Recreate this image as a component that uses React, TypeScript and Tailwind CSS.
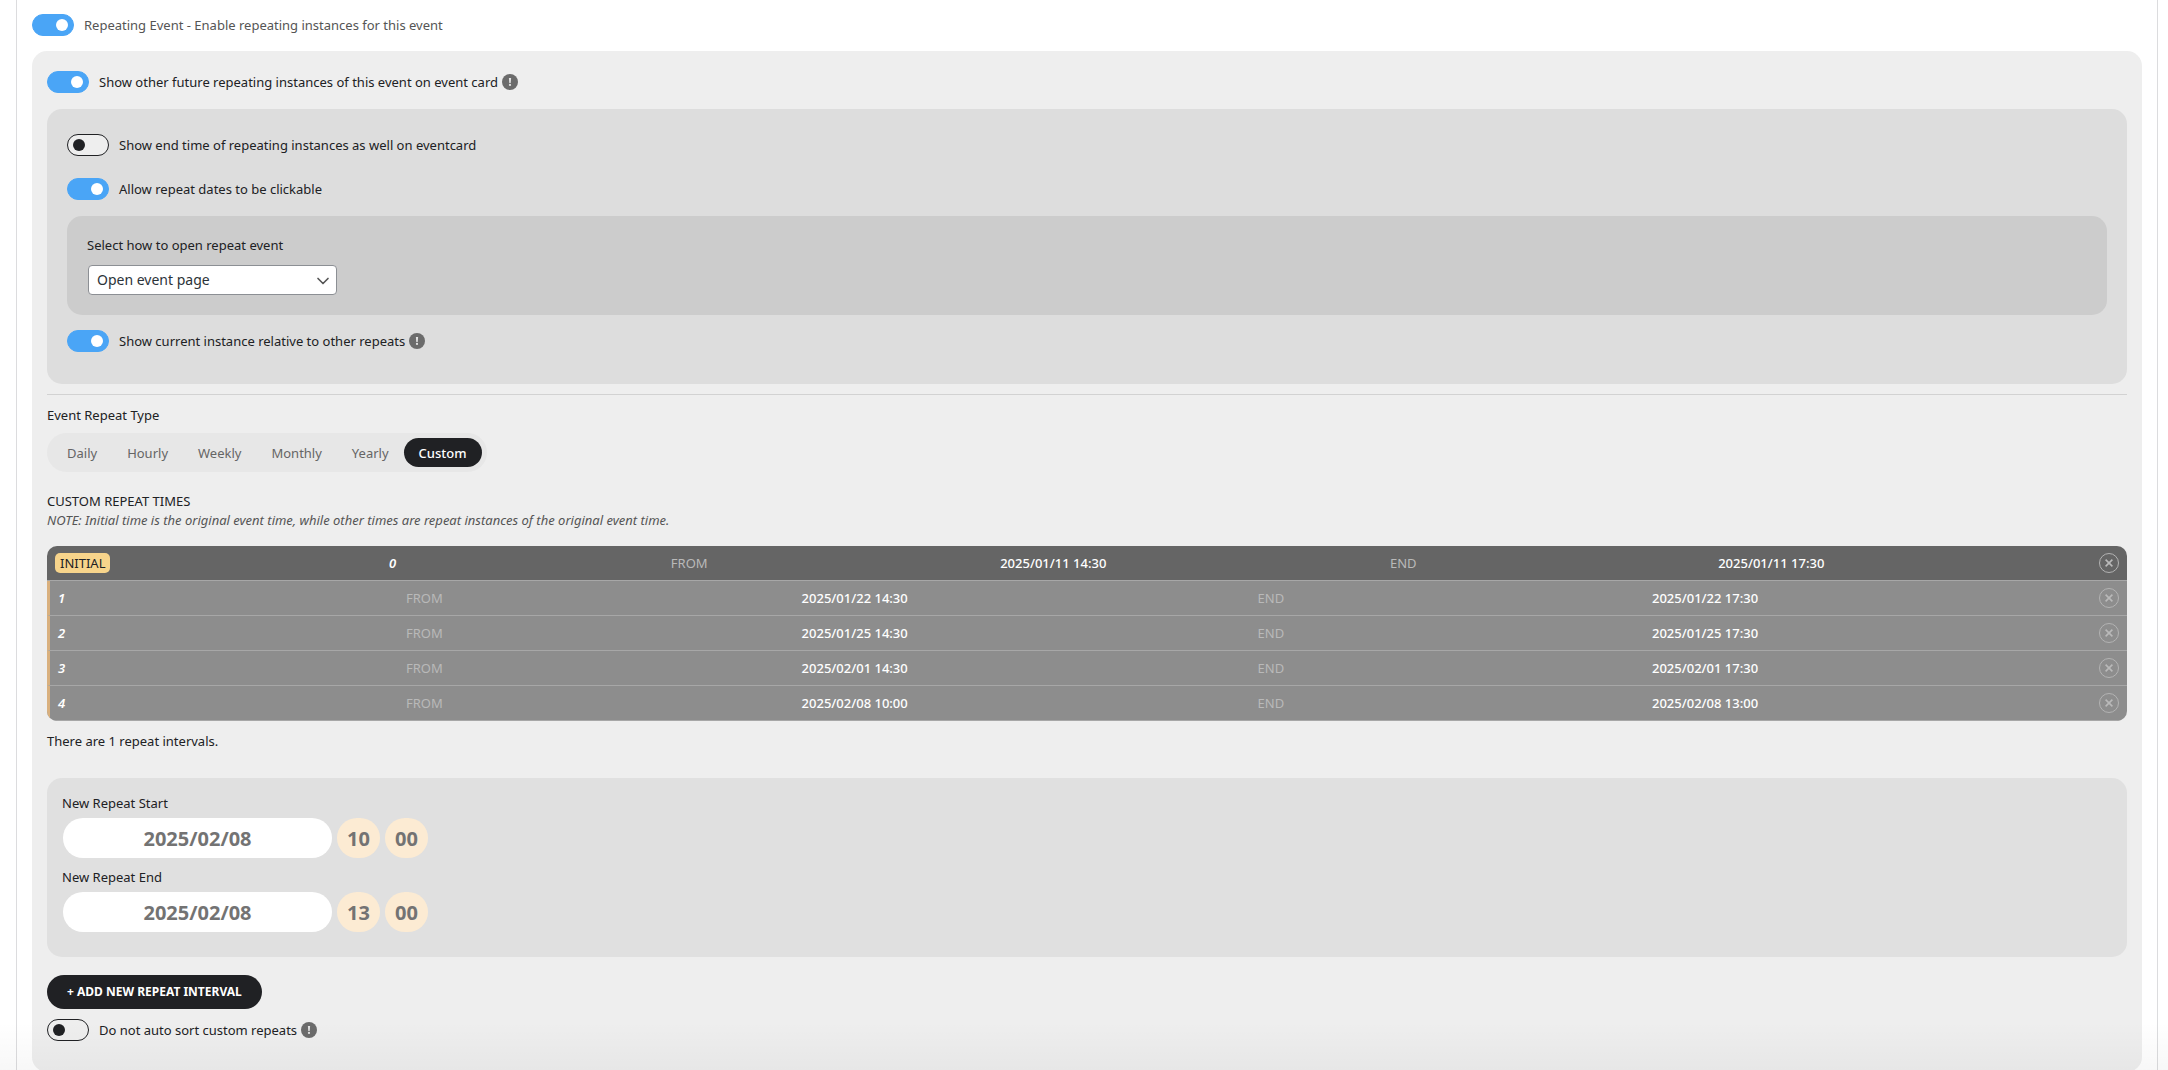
import { ChevronDown } from 'lucide-react';

function InfoBadge() {
  return (
    <svg viewBox="0 0 16 16" className="ml-1 size-4 shrink-0" role="img" aria-label="More information">
      <circle cx="8" cy="8" r="8" fill="#6b6b6b" />
      <path d="M6.9 4h2.2l-.4 4.9H7.3z" fill="#e4e4e4" />
      <circle cx="8" cy="10.9" r="1.1" fill="#e4e4e4" />
    </svg>
  );
}

function Toggle({
  label,
  on = false,
  info = false,
  muted = false,
  clear = false,
}: {
  label: string;
  on?: boolean;
  info?: boolean;
  muted?: boolean;
  clear?: boolean;
}) {
  return (
    <label className="flex h-[22px] w-fit items-center">
      <input type="checkbox" role="switch" defaultChecked={on} className="peer sr-only" />
      <span
        className={
          (clear ? 'bg-transparent ' : 'bg-[#eeeeee] ') +
          'mr-2.5 flex h-[22px] w-[42px] shrink-0 items-center rounded-full border border-[#202124] px-[5px] peer-checked:justify-end peer-checked:border-[#4aa5f6] peer-checked:bg-[#4aa5f6] [&>span]:bg-[#202124] peer-checked:[&>span]:bg-white'
        }
      >
        <span className="size-3 rounded-full" />
      </span>
      <span className={muted ? 'text-[#555555]' : 'text-[#202124]'}>{label}</span>
      {info && <InfoBadge />}
    </label>
  );
}

const repeatTypes = ['Daily', 'Hourly', 'Weekly', 'Monthly', 'Yearly', 'Custom'];

const instances = [
  { start: '2025/01/11 14:30', end: '2025/01/11 17:30' },
  { start: '2025/01/22 14:30', end: '2025/01/22 17:30' },
  { start: '2025/01/25 14:30', end: '2025/01/25 17:30' },
  { start: '2025/02/01 14:30', end: '2025/02/01 17:30' },
  { start: '2025/02/08 10:00', end: '2025/02/08 13:00' },
];

function InstanceRow({ index, start, end }: { index: number; start: string; end: string }) {
  const initial = index === 0;
  return (
    <tr
      className={
        'flex h-[35px] items-center justify-between border-b border-b-[#a7a7a7] px-2 text-white ' +
        (initial ? 'bg-[#656565]' : 'border-l-[3px] border-l-[#d9b07e] bg-[#8d8d8d]')
      }
    >
      {initial && (
        <td className="mr-1 h-5 rounded-[5px] bg-[#f7d48b] px-[5px] leading-5 text-[#202124]">INITIAL</td>
      )}
      <td className="font-semibold italic">{index}</td>
      <td className="mr-[18px] text-[#b9b9b9]">FROM</td>
      <td className="font-medium">{start}</td>
      <td className="mr-[27px] ml-[9px] text-[#b9b9b9]">END</td>
      <td className="font-medium">{end}</td>
      <td className="flex">
        <button
          type="button"
          aria-label="Remove instance"
          className="flex size-5 items-center justify-center rounded-full border border-[#b3b3b3] text-[#b9b9b9]"
        >
          <svg viewBox="0 0 8 8" className="size-2" fill="none" stroke="currentColor" strokeWidth="1.6">
            <path d="M.6.6l6.8 6.8M7.4.6L.6 7.4" />
          </svg>
        </button>
      </td>
    </tr>
  );
}

function DateTimeField({ id, label, hour }: { id: string; label: string; hour: string }) {
  return (
    <div>
      <label htmlFor={id} className="block leading-5">
        {label}
      </label>
      <div className="mt-[5px] ml-px flex gap-[5px] text-xl font-bold text-[#737373]">
        <input
          id={id}
          type="text"
          defaultValue="2025/02/08"
          className="h-10 w-[269px] rounded-full bg-white text-center"
        />
        <input
          type="text"
          aria-label={label + ' hour'}
          defaultValue={hour}
          className="h-10 w-[43px] rounded-[20px] bg-[#fcebd3] text-center"
        />
        <input
          type="text"
          aria-label={label + ' minute'}
          defaultValue="00"
          className="h-10 w-[43px] rounded-[20px] bg-[#fcebd3] text-center"
        />
      </div>
    </div>
  );
}

export default function App() {
  return (
    <div className="relative h-screen overflow-hidden bg-white px-4 pr-2.5 font-['Noto_Sans',sans-serif] text-[13px] leading-5 text-[#202124]">
      <main className="border-x border-[#dcdcde] px-[15px] pt-3.5 pb-5">
        <Toggle label="Repeating Event - Enable repeating instances for this event" on muted />

        <section className="mt-[15px] rounded-[15px] bg-[#eeeeee] px-[15px] pt-5 pb-[31px]">
          <Toggle label="Show other future repeating instances of this event on event card" on info />

          <div className="mt-4 rounded-[15px] bg-[#dddddd] px-5 pt-[25px] pb-8">
            <Toggle label="Show end time of repeating instances as well on eventcard" />
            <div className="mt-[22px]">
              <Toggle label="Allow repeat dates to be clickable" on />
            </div>
            <div className="mt-4 mb-[15px] rounded-[15px] bg-[#cccccc] px-5 pt-[19px] pb-5">
              <label htmlFor="open-mode" className="block">
                Select how to open repeat event
              </label>
              <div className="relative mt-2.5 ml-px w-[249px]">
                <select
                  id="open-mode"
                  className="block h-[30px] w-full appearance-none rounded-[4px] border border-[#8c8f94] bg-white px-2 text-sm text-[#2c3338]"
                >
                  <option>Open event page</option>
                </select>
                <ChevronDown
                  className="pointer-events-none absolute top-1.5 right-1 size-5 text-[#555555]"
                  strokeWidth={2}
                />
              </div>
            </div>
            <Toggle label="Show current instance relative to other repeats" on info />
          </div>

          <hr className="mt-2.5 border-[#d2d2d2]" />

          <h2 className="mt-2.5">Event Repeat Type</h2>
          <div className="mt-2 flex w-fit rounded-[20px] bg-[#e7e7e7] p-[5px]">
            {repeatTypes.map((type) => (
              <button
                key={type}
                type="button"
                className={
                  'h-[29px] rounded-full px-[15px] ' +
                  (type === 'Custom' ? 'bg-[#202124] font-medium text-white' : 'text-[#656565]')
                }
              >
                {type}
              </button>
            ))}
          </div>

          <h3 className="mt-5 leading-[18px]">CUSTOM REPEAT TIMES</h3>
          <p className="text-[#555555] italic">
            NOTE: Initial time is the original event time, while other times are repeat instances of the original event
            time.
          </p>

          <table className="mt-4 block overflow-hidden rounded-[10px]">
            <tbody className="block">
              {instances.map((item, index) => (
                <InstanceRow key={item.start} index={index} start={item.start} end={item.end} />
              ))}
            </tbody>
          </table>

          <p className="mt-2.5">There are 1 repeat intervals.</p>

          <div className="mt-[27px] flex flex-col gap-[9px] rounded-[15px] bg-[#e0e0e0] px-[15px] pt-[15px] pb-[25px]">
            <DateTimeField id="repeat-start" label="New Repeat Start" hour="10" />
            <DateTimeField id="repeat-end" label="New Repeat End" hour="13" />
          </div>

          <button
            type="button"
            className="mt-[18px] mb-2.5 block h-[34px] rounded-full bg-[#202124] px-5 text-xs font-bold text-white"
          >
            + ADD NEW REPEAT INTERVAL
          </button>
          <Toggle label="Do not auto sort custom repeats" info clear />
        </section>
      </main>
      <div className="pointer-events-none absolute inset-x-0 bottom-0 h-12 bg-linear-to-b from-transparent to-black/3" />
    </div>
  );
}
